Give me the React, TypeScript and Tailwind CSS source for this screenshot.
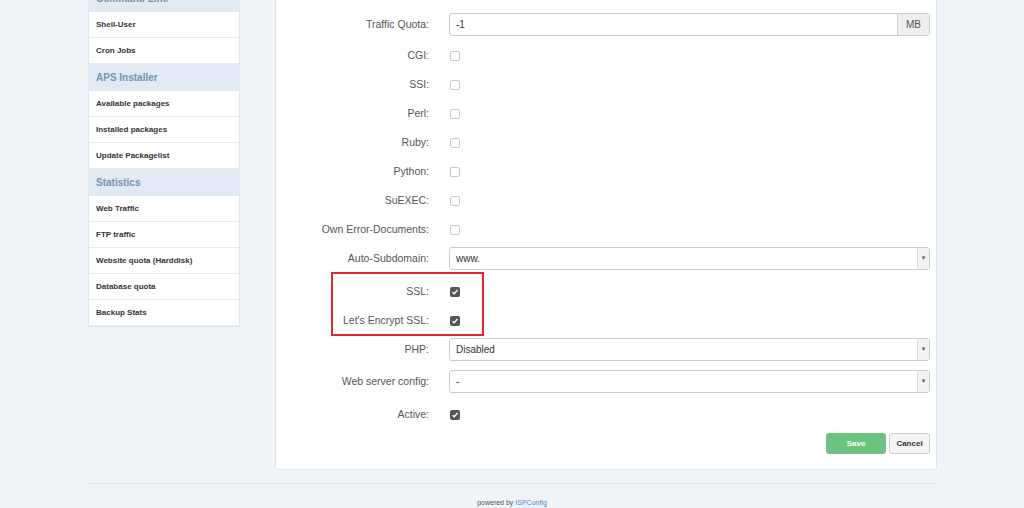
import React from "react";

const Check = ({ on }: { on?: boolean }) =>
  on ? (
    <span className="ml-[1px] w-[10px] h-[10px] rounded-[2px] bg-[#555] flex items-center justify-center">
      <svg width="8" height="8" viewBox="0 0 8 8"><path d="M1.5 4.2 L3.2 5.8 L6.5 2" stroke="#fff" strokeWidth="1.3" fill="none" /></svg>
    </span>
  ) : (
    <span className="ml-[1px] w-[10px] h-[10px] rounded-[2px] border border-[#c8c8c8] bg-white" />
  );

const Row = ({ label, children, h = "h-[29px]" }: { label: string; children: React.ReactNode; h?: string }) => (
  <div className={`flex items-center ${h}`}>
    <div className="w-[173px] text-right pr-[20px] text-[#555] text-[10.5px]">{label}</div>
    <div className="flex-1 flex items-center">{children}</div>
  </div>
);

const Select = ({ v }: { v: string }) => (
  <div className="w-full h-[23px] border border-[#ccc] rounded-[3px] flex items-center bg-white text-[10px] text-[#333]">
    <span className="flex-1 pl-[6px]">{v}</span>
    <span className="w-[12px] h-full border-l border-[#ddd] bg-[#f3f3f3] flex items-center justify-center text-[6px] text-[#666]">▼</span>
  </div>
);

const Item = ({ t }: { t: string }) => (
  <div className="h-[26px] flex items-center px-[7px] text-[8px] font-bold text-[#333] border-b border-[#e6ebf0] bg-white">{t}</div>
);
const Head = ({ t, h = "h-[27px]" }: { t: string; h?: string }) => (
  <div className={`${h} flex items-center px-[7px] text-[10px] font-bold text-[#7a93ad] bg-[#e1e9f3]`}>{t}</div>
);

export default function App() {
  return (
    <div className="w-[1024px] h-[508px] overflow-hidden bg-[#f0f3f7] relative" style={{ fontFamily: "'Liberation Sans', Arial, sans-serif" }}>
      <div className="flex items-start pl-[88px] gap-[35px]">
        <div className="w-[152px] mt-[-16px] border border-[#e1e6ec] bg-white">
          <Head t="Command Line" />
          <Item t="Shell-User" />
          <Item t="Cron Jobs" />
          <Head t="APS Installer" />
          <Item t="Available packages" />
          <Item t="Installed packages" />
          <Item t="Update Packagelist" />
          <Head t="Statistics" />
          <Item t="Web Traffic" />
          <Item t="FTP traffic" />
          <Item t="Website quota (Harddisk)" />
          <Item t="Database quota" />
          <Item t="Backup Stats" />
        </div>
        <div className="w-[662px] h-[480px] mt-[-10px] bg-white border border-[#e1e6ec] rounded-b-[3px] pt-[17px] pr-[6px] relative">
          <Row label="Traffic Quota:" h="h-[33px]">
            <div className="w-full h-[23px] border border-[#ccc] rounded-[3px] flex text-[10px] text-[#333]">
              <span className="flex-1 pl-[6px] flex items-center">-1</span>
              <span className="w-[32px] bg-[#eee] border-l border-[#ccc] flex items-center justify-center text-[#555]">MB</span>
            </div>
          </Row>
          <Row label="CGI:"><Check /></Row>
          <Row label="SSI:"><Check /></Row>
          <Row label="Perl:"><Check /></Row>
          <Row label="Ruby:"><Check /></Row>
          <Row label="Python:"><Check /></Row>
          <Row label="SuEXEC:"><Check /></Row>
          <Row label="Own Error-Documents:"><Check /></Row>
          <Row label="Auto-Subdomain:" h="h-[29px]"><Select v="www." /></Row>
          <div className="h-[4px]" />
          <Row label="SSL:"><Check on /></Row>
          <Row label="Let's Encrypt SSL:"><Check on /></Row>
          <Row label="PHP:"><Select v="Disabled" /></Row>
          <Row label="Web server config:" h="h-[35px]"><Select v="-" /></Row>
          <Row label="Active:" h="h-[31px]"><Check on /></Row>
          <div className="flex justify-end gap-[3px] mt-[3px]">
            <button className="w-[60px] h-[21px] rounded-[3px] bg-[#6cc27f] text-white text-[8px] font-bold">Save</button>
            <button className="w-[41px] h-[21px] rounded-[3px] bg-[#f5f5f5] border border-[#ccc] text-[#333] text-[8px] font-bold">Cancel</button>
          </div>
          <div className="absolute left-[55px] top-[281px] w-[153px] h-[64px] border-2 border-[#e0262c]" />
        </div>
      </div>
      <div className="ml-[88px] w-[848px] mt-[13px] border-t border-[#dfe4ea]" />
      <div className="text-center text-[7px] text-[#555] mt-[14px]">powered by <span className="text-[#4a8ac9]">ISPConfig</span></div>
    </div>
  );
}
